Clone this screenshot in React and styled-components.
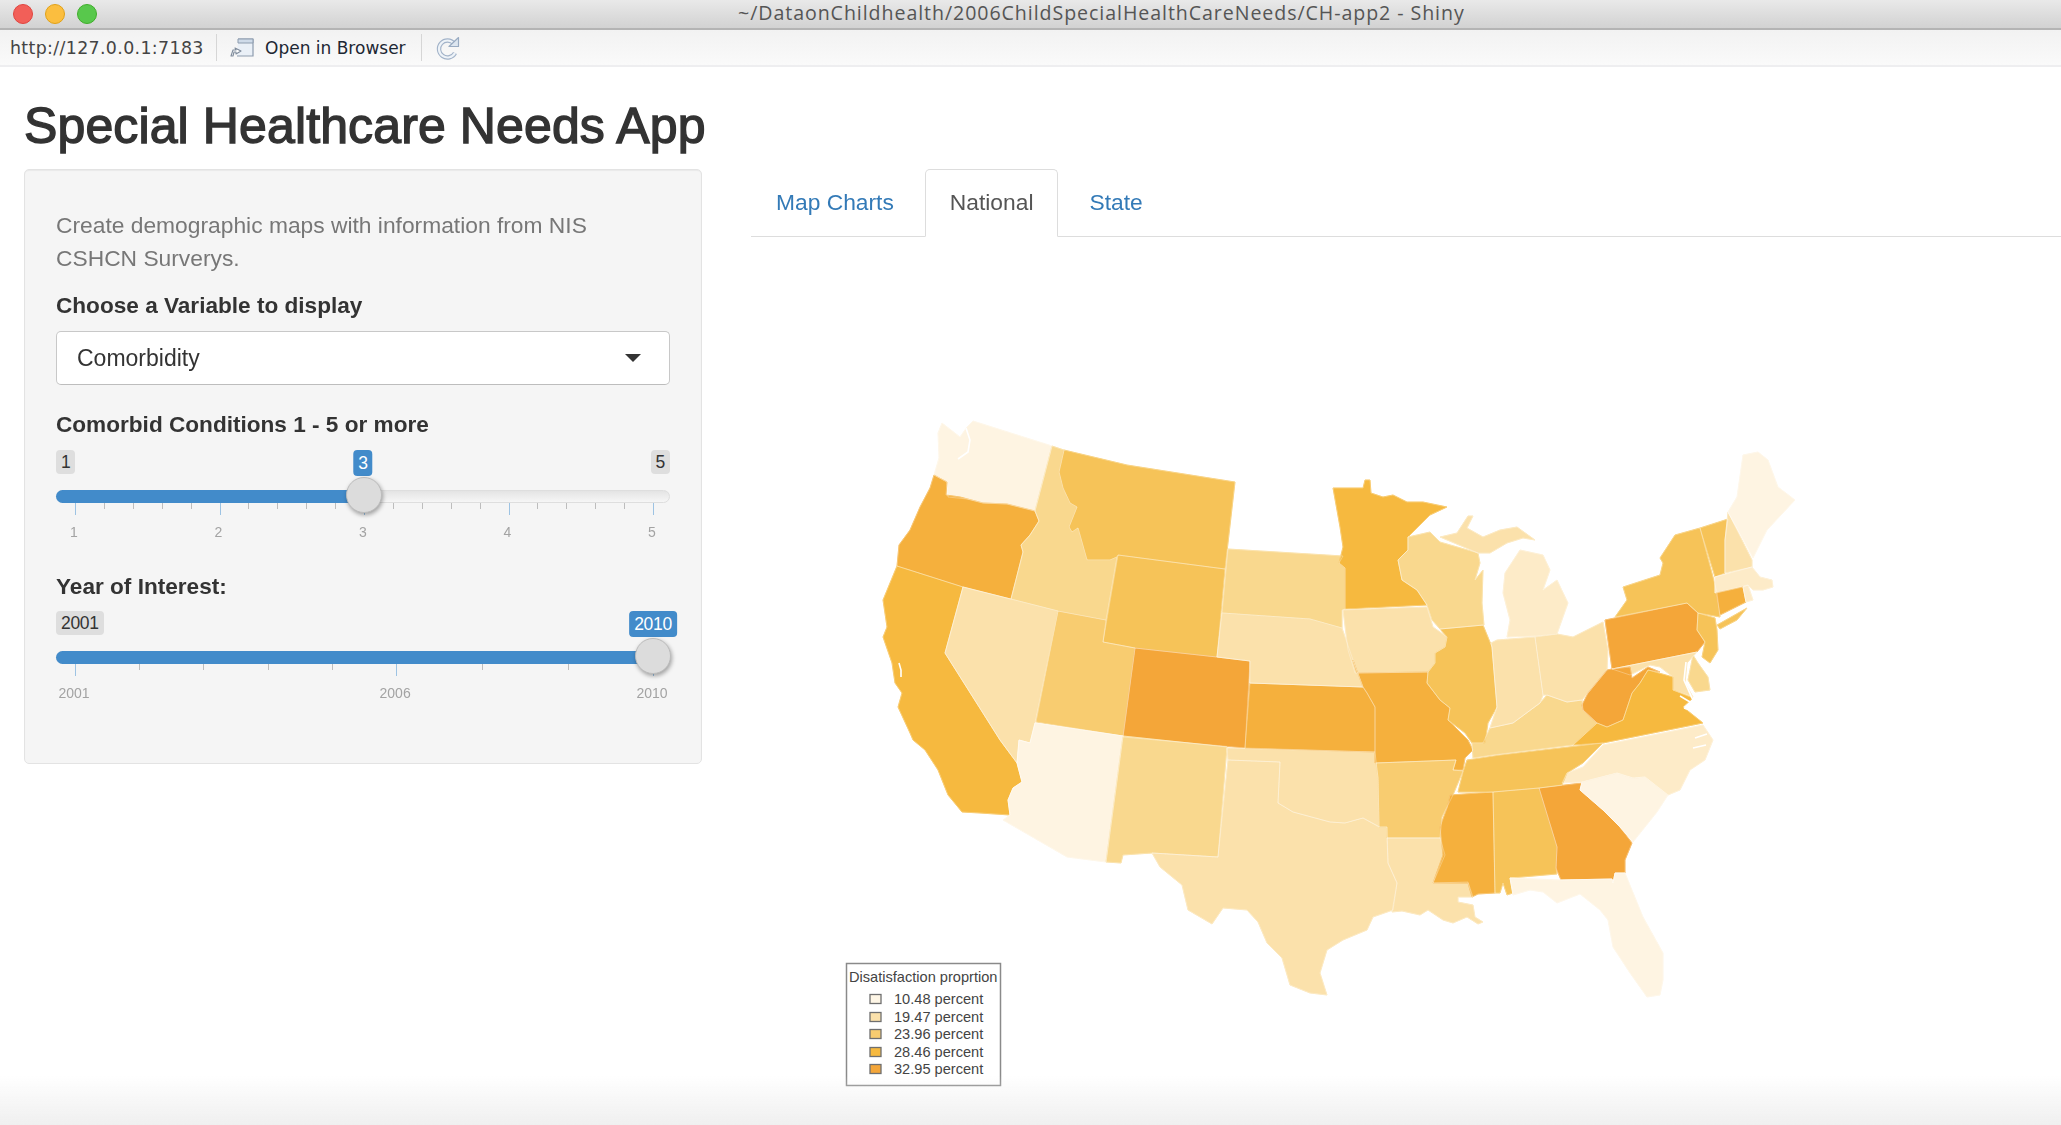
import React from 'react';
import styled, { createGlobalStyle } from 'styled-components';

const GlobalStyle = createGlobalStyle`
  html, body {
    margin: 0;
    height: 1125px;
    overflow: hidden;
    background: #fff;
    font-family: "Liberation Sans", Arial, sans-serif;
    -webkit-font-smoothing: antialiased;
  }
`;

// the reference is a resampled retina capture, so everything is a touch soft
const Window = styled.div`
  display: flex;
  flex-direction: column;
  height: 1125px;
  overflow: hidden;
  position: relative;
  filter: blur(0.4px);
`;

const TitleBar = styled.div`
  height: 28px;
  flex: none;
  display: flex;
  align-items: center;
  padding-left: 13px;
  gap: 12px;
  position: relative;
  background: linear-gradient(#e9e9e9, #d2d2d2);
  border-bottom: 2px solid #b4b4b4;
`;

const Light = styled.span`
  width: 20px;
  height: 20px;
  border-radius: 50%;
  background: ${(p) => p.$color};
  border: 1px solid ${(p) => p.$edge};
  box-sizing: border-box;
`;

const WindowTitle = styled.div`
  position: absolute;
  left: 738px;
  top: 2px;
  font-family: "Open Sans", sans-serif;
  font-size: 19.6px;
  letter-spacing: 0.93px;
  line-height: 22px;
  color: #555;
  white-space: nowrap;
`;

const Toolbar = styled.div`
  height: 35px;
  flex: none;
  display: flex;
  align-items: center;
  background: linear-gradient(#f2f2f2, #fafafa);
  border-bottom: 2px solid #eeeef0;
  font-family: "DejaVu Sans", sans-serif;
  color: #333;
`;

const UrlText = styled.span`
  margin-left: 10px;
  width: 206px;
  flex: none;
  font-size: 17.4px;
  letter-spacing: 0.35px;
  white-space: nowrap;
  color: #444;
`;

const ToolDivider = styled.span`
  width: 1px;
  height: 27px;
  background: #d6d6d6;
`;

const OpenButton = styled.div`
  display: flex;
  align-items: center;
  gap: 9px;
  margin-left: 12px;
  width: 192px;
  color: #1d2733;
  white-space: nowrap;
  font-size: 17px;
`;

const ReloadIcon = styled.svg`
  margin-left: 13px;
`;

const Columns = styled.div`
  flex: 1;
  display: grid;
  grid-template-columns: 678px 1fr;
  column-gap: 49px;
  padding-left: 24px;
  min-height: 0;
`;

const Heading = styled.h1`
  grid-column: 1 / 3;
  margin: 32px 0 16px;
  font-size: 50px;
  line-height: 54px;
  font-weight: 400;
  color: #333;
  letter-spacing: 0.12px;
  white-space: nowrap;
  -webkit-text-stroke: 1.4px #333;
`;

const Well = styled.aside`
  height: 595px;
  box-sizing: border-box;
  padding: 39px 31px 0;
  background: #f5f5f5;
  border: 1px solid #e3e3e3;
  border-radius: 5px;
  box-shadow: inset 0 1px 1px rgba(0, 0, 0, 0.05);
`;

const Intro = styled.p`
  margin: 0 0 18px;
  font-size: 22.8px;
  line-height: 33px;
  color: #777;
`;

const FieldLabel = styled.div`
  font-size: 22.6px;
  line-height: 26px;
  font-weight: 700;
  color: #333;
  margin-bottom: ${(p) => p.$gap}px;
`;

const SelectBox = styled.div`
  height: 54px;
  box-sizing: border-box;
  display: flex;
  align-items: center;
  justify-content: space-between;
  padding: 0 28px 0 20px;
  margin-bottom: 27px;
  background: #fff;
  border: 1px solid #c8c8c8;
  border-bottom-color: #bdbdbd;
  border-radius: 5px;
  font-size: 23px;
  color: #333;
`;

const Caret = styled.span`
  width: 0;
  height: 0;
  border-left: 8px solid transparent;
  border-right: 8px solid transparent;
  border-top: 8px solid #333;
`;

const SliderWrap = styled.div`
  position: relative;
  width: 614px;
  height: 90px;
`;

const SliderGap = styled.div`
  height: 34px;
`;

const Track = styled.div`
  position: absolute;
  left: 0;
  right: 0;
  top: 40px;
  height: 13px;
  border-radius: 7px;
  background: linear-gradient(#e4e4e4, #f6f6f6);
  border: 1px solid #dedede;
  box-sizing: border-box;
`;

const TrackFill = styled.div`
  position: absolute;
  left: 0;
  top: 40px;
  height: 13px;
  border-radius: 7px 0 0 7px;
  background: #428bca;
`;

const Tick = styled.span`
  position: absolute;
  top: 53px;
  width: 1px;
  height: ${(p) => (p.$major ? 12 : 6)}px;
  background: ${(p) => (p.$major ? '#9dc3e3' : '#bdbdbd')};
`;

const TickLabel = styled.span`
  position: absolute;
  top: 74px;
  transform: translateX(-50%);
  margin-left: -1px;
  font-size: 14px;
  line-height: 17px;
  color: #a3a3a3;
`;

const Handle = styled.span`
  position: absolute;
  top: 27px;
  width: 36px;
  height: 36px;
  box-sizing: border-box;
  margin-left: -18px;
  border-radius: 50%;
  background: #dcdcdc;
  border: 1px solid #bbb;
  box-shadow: 1px 2px 4px rgba(0, 0, 0, 0.35);
`;

const Bubble = styled.span`
  position: absolute;
  top: 0;
  height: ${(p) => (p.$active ? 26 : 24)}px;
  padding: 0 5px;
  border-radius: 4px;
  font-size: 17.5px;
  line-height: ${(p) => (p.$active ? 26 : 24)}px;
  letter-spacing: -0.3px;
  background: ${(p) => (p.$active ? '#428bca' : '#dedede')};
  color: ${(p) => (p.$active ? '#fff' : '#333')};
  ${(p) => (p.$active ? 'transform: translateX(-50%);' : '')}
`;

const Main = styled.main`
  display: flex;
  flex-direction: column;
  min-width: 0;
`;

const TabBar = styled.nav`
  display: flex;
  height: 67px;
  flex: none;
  border-bottom: 1px solid #ddd;
  font-size: 22.8px;
`;

const Tab = styled.div`
  box-sizing: border-box;
  height: ${(p) => (p.$active ? 68 : 67)}px;
  padding: 0 24px 2px;
  display: flex;
  align-items: center;
  border: 1px solid ${(p) => (p.$active ? '#ddd' : 'transparent')};
  border-bottom: ${(p) => (p.$active ? '1px solid #fff' : '0')};
  border-radius: 5px 5px 0 0;
  background: ${(p) => (p.$active ? '#fff' : 'transparent')};
  color: ${(p) => (p.$active ? '#555' : '#337ab7')};
  margin-right: 6px;
`;

const MapSvg = styled.svg`
  display: block;
  flex: 1;
  width: 1310px;
  height: 888px;
`;

const BottomFade = styled.div`
  position: absolute;
  left: 0;
  right: 0;
  bottom: 0;
  height: 50px;
  pointer-events: none;
  background: linear-gradient(rgba(240, 240, 240, 0), rgba(238, 238, 238, 0.9));
`;

// fill colours of the five classes plus the in-between shades of the plot
const C = {
  a: '#f4a639',
  b: '#f5b03d',
  c: '#f6b93f',
  d: '#f6c358',
  e: '#f8cc70',
  f: '#f9d88e',
  g: '#fbe1ab',
  h: '#fdebc8',
  i: '#fef4e2',
};

const STATES = [
  ['WA', C.i, '942,423 960,437 967,427 973,421 1052,446 1035,511 1007,504 983,503 967,499 948,497 947,482 934,475 939,458 938,433'],
  ['OR', C.b, '934,475 947,482 946,495 960,497 983,503 1007,504 1035,511 1039,521 1030,535 1021,545 1023,552 1011,599 963,587 897,566 899,545 910,530 920,507 930,488'],
  ['CA', C.c, '897,566 963,587 945,653 1000,740 1017,763 1022,782 1013,788 1008,800 1010,815 980,813 962,812 948,795 938,770 925,750 913,740 910,733 898,707 902,693 895,683 892,663 883,637 887,627 883,600'],
  ['NV', C.g, '963,587 1058,611 1035,723 1030,743 1019,740 1017,763 1000,740 945,653'],
  ['ID', C.f, '1052,446 1064,450 1059,472 1063,488 1070,503 1077,507 1069,527 1072,532 1078,528 1087,560 1110,560 1117,557 1106,620 1058,611 1011,599 1023,552 1021,545 1030,535 1039,521 1035,511'],
  ['MT', C.d, '1064,450 1127,465 1235,482 1225,569 1118,555 1117,557 1110,560 1087,560 1078,528 1072,532 1069,527 1077,507 1070,503 1063,488 1059,472'],
  ['WY', C.d, '1118,555 1225,569 1217,657 1135,648 1103,642'],
  ['UT', C.e, '1058,611 1106,620 1103,642 1135,648 1123,736 1036,722'],
  ['CO', C.a, '1135,648 1217,657 1250,661 1245,748 1123,737'],
  ['AZ', C.i, '1035,723 1123,736 1106,862 1067,857 1003,820 1010,815 1008,800 1013,788 1022,782 1017,763 1019,740 1030,743'],
  ['NM', C.f, '1123,736 1227,747 1218,857 1152,853 1123,855 1121,863 1106,862'],
  ['TX', C.g, '1228,760 1280,762 1278,803 1293,812 1330,822 1345,823 1363,818 1380,827 1387,827 1388,863 1397,883 1393,910 1373,917 1367,930 1343,940 1327,950 1320,973 1327,995 1310,993 1290,985 1282,958 1267,943 1258,922 1247,910 1223,908 1212,924 1188,910 1182,885 1160,867 1152,853 1218,857'],
  ['OK', C.g, '1227,748 1375,752 1378,778 1379,827 1363,818 1345,823 1330,822 1293,812 1278,803 1280,762 1228,760'],
  ['KS', C.b, '1250,683 1363,687 1367,693 1375,707 1375,752 1245,748'],
  ['NE', C.g, '1222,613 1310,619 1342,628 1353,660 1363,687 1250,683 1250,661 1217,657'],
  ['SD', C.f, '1228,549 1343,556 1339,563 1345,568 1345,609 1342,610 1342,628 1310,619 1222,613'],
  ['MN', C.c, '1333,488 1363,488 1365,480 1370,480 1371,493 1383,497 1393,495 1407,502 1423,502 1447,507 1430,515 1408,537 1408,550 1398,560 1402,580 1417,590 1427,605 1345,609 1345,568 1339,563 1343,547 1340,527'],
  ['IA', C.g, '1343,610 1427,607 1433,627 1447,637 1445,647 1435,653 1435,663 1428,672 1355,673 1348,650'],
  ['MO', C.b, '1357,673 1428,672 1427,683 1440,700 1450,708 1448,720 1468,740 1473,750 1465,758 1463,770 1453,770 1456,760 1375,763 1375,707 1367,693 1363,687 1353,660'],
  ['AR', C.e, '1376,763 1456,760 1453,770 1463,771 1453,795 1442,817 1440,838 1387,838 1387,827 1379,827 1378,778'],
  ['LA', C.g, '1387,838 1440,838 1445,855 1433,883 1468,882 1473,897 1458,897 1458,902 1473,905 1475,917 1483,922 1478,924 1467,917 1453,923 1443,920 1428,910 1420,915 1402,911 1392,912 1397,883 1388,863'],
  ['MS', C.b, '1450,795 1493,792 1495,893 1478,894 1472,897 1468,883 1433,883 1443,855 1440,827 1447,808'],
  ['AL', C.d, '1493,792 1539,788 1557,847 1556,868 1557,874 1510,878 1513,893 1507,895 1503,883 1500,893 1495,893'],
  ['GA', C.a, '1539,788 1582,783 1580,790 1603,810 1620,827 1632,843 1625,860 1625,873 1615,873 1613,883 1612,879 1561,880 1556,868 1557,847'],
  ['FL', C.i, '1510,878 1561,880 1612,879 1613,883 1615,873 1625,873 1643,917 1663,953 1663,980 1660,995 1647,997 1630,973 1613,947 1608,920 1600,910 1580,894 1557,903 1543,892 1530,890 1513,895'],
  ['SC', C.i, '1580,790 1582,782 1617,773 1633,778 1645,777 1668,795 1657,812 1633,842 1620,827 1603,810'],
  ['NC', C.h, '1562,783 1567,773 1583,767 1603,745 1703,725 1713,740 1705,760 1690,770 1680,790 1668,795 1645,777 1633,778 1617,773 1582,782'],
  ['TN', C.d, '1458,792 1463,772 1467,760 1500,755 1603,743 1583,763 1567,773 1562,785 1539,788 1493,792'],
  ['KY', C.f, '1472,743 1483,743 1490,728 1513,723 1540,703 1547,695 1567,702 1582,700 1583,710 1597,723 1573,745 1493,755 1473,758'],
  ['IL', C.d, '1440,629 1483,625 1492,647 1497,707 1488,723 1485,743 1472,743 1465,733 1448,720 1450,708 1440,700 1427,683 1428,672 1435,663 1435,653 1445,647 1447,637'],
  ['WI', C.f, '1408,537 1430,532 1440,542 1478,553 1480,563 1475,580 1483,570 1482,603 1484,625 1440,629 1432,620 1427,605 1417,590 1402,580 1398,560 1408,550'],
  ['MI-U', C.g, '1440,537 1457,533 1468,516 1473,516 1467,528 1483,537 1500,530 1517,527 1535,540 1523,538 1507,543 1490,553 1478,553'],
  ['MI', C.h, '1507,637 1510,620 1503,593 1505,573 1520,550 1543,555 1550,570 1543,590 1557,580 1568,603 1557,634 1537,636'],
  ['IN', C.g, '1491,643 1497,640 1535,637 1543,695 1540,703 1513,723 1490,728 1497,707 1492,647'],
  ['OH', C.g, '1535,637 1557,634 1573,637 1603,622 1608,650 1607,670 1588,693 1582,700 1567,702 1547,695 1543,695'],
  ['PA', C.a, '1605,620 1687,603 1698,613 1697,630 1705,642 1697,652 1612,669'],
  ['NY', C.d, '1615,617 1627,600 1623,587 1660,575 1663,563 1660,558 1675,535 1700,528 1713,577 1717,593 1720,617 1698,613 1687,603'],
  ['LI', C.d, '1717,625 1747,608 1737,620 1720,629'],
  ['VT', C.d, '1700,528 1728,519 1725,540 1725,573 1715,577'],
  ['NH', C.g, '1728,512 1752,560 1752,567 1725,573 1725,540'],
  ['ME', C.i, '1743,455 1758,452 1768,460 1778,487 1795,500 1767,530 1753,558 1728,512 1737,497'],
  ['MA', C.h, '1715,577 1752,567 1760,577 1772,580 1773,587 1763,590 1753,590 1748,585 1715,593'],
  ['CT', C.b, '1716,593 1743,587 1746,602 1720,615'],
  ['RI', C.h, '1743,587 1748,585 1753,600 1746,602'],
  ['NJ', C.d, '1698,613 1715,618 1717,630 1718,650 1710,663 1702,657 1705,642 1697,630'],
  ['MD', C.g, '1612,669 1697,652 1687,663 1685,683 1693,697 1673,690 1673,677 1660,667 1650,665 1630,675'],
  ['DE', C.f, '1693,655 1698,663 1708,677 1710,690 1695,692 1688,680'],
  ['WV', C.a, '1612,669 1630,667 1632,678 1648,667 1660,672 1648,670 1640,683 1632,693 1623,720 1607,727 1597,723 1583,710 1582,705 1588,693 1607,670'],
  ['VA', C.c, '1573,745 1597,723 1607,727 1623,720 1632,693 1640,683 1648,670 1673,677 1673,690 1693,698 1683,707 1703,723 1603,743'],
];

// water that cuts into the land: Puget Sound, San Francisco Bay, Chesapeake Bay, Pamlico Sound
const INLETS = [
  'M966,428 L970,440 L968,452 L958,459',
  'M899,663 L901,670 L901,677',
  'M1686,662 L1684,680 L1692,698 L1702,712',
  'M1680,696 L1690,702 M1684,708 L1696,712',
  'M1695,738 L1707,734 M1693,748 L1706,745',
];

const LEGEND = [
  ['10.48 percent', '#fef6e6', 999],
  ['19.47 percent', '#fbe1ab', 1017],
  ['23.96 percent', '#f8cc70', 1034],
  ['28.46 percent', '#f6b93f', 1052],
  ['32.95 percent', '#f4a639', 1069],
];

const COMORBID_TICKS = [1, 1.2, 1.4, 1.6, 1.8, 2, 2.2, 2.4, 2.6, 2.8, 3, 3.2, 3.4, 3.6, 3.8, 4, 4.2, 4.4, 4.6, 4.8, 5];
const YEAR_TICKS = [2001, 2002, 2003, 2004, 2005, 2006, 2007.33, 2008.67, 2010];

function Slider({ ticks, labels, from, to, min, max, value, valueLeft }) {
  // scale runs from 19px to 597px inside the 614px wide slider
  const place = (v) => 19 + ((v - min) / (max - min)) * 578;
  return (
    <SliderWrap>
      <Bubble style={{ left: 0 }}>{from}</Bubble>
      {to && <Bubble style={{ right: 0 }}>{to}</Bubble>}
      <Bubble $active style={{ left: valueLeft }}>{value}</Bubble>
      <Track />
      <TrackFill style={{ width: place(Number(value)) }} />
      {ticks.map((t) => (
        <Tick key={t} $major={labels.includes(t)} style={{ left: place(t) }} />
      ))}
      {labels.map((t) => (
        <TickLabel key={t} style={{ left: place(t) }}>{t}</TickLabel>
      ))}
      <Handle style={{ left: place(Number(value)) }} />
    </SliderWrap>
  );
}

function UsMap() {
  return (
    <MapSvg viewBox="751 237 1310 888">
      {STATES.map(([id, fill, points]) => (
        <polygon key={id} points={points} fill={fill} stroke={fill} strokeWidth="1" strokeLinejoin="round" />
      ))}
      {STATES.map(([id, , points]) => (
        <polygon key={id} points={points} fill="none" stroke="#fff" strokeOpacity="0.4" strokeWidth="0.7" />
      ))}
      {INLETS.map((d) => (
        <path key={d} d={d} fill="none" stroke="#fff" strokeWidth="1.6" />
      ))}
      <rect x="846.5" y="963.5" width="154" height="122" fill="#fff" stroke="#8a8a8a" strokeWidth="1.5" />
      <text x="849" y="982" fontFamily="Liberation Sans, sans-serif" fontSize="14.6" fill="#444">Disatisfaction proprtion</text>
      {LEGEND.map(([label, fill, y]) => (
        <g key={label}>
          <rect x="870" y={y - 4.5} width="11" height="9" fill={fill} stroke="#6f6f6f" strokeWidth="1.3" />
          <text x="894" y={y + 5} fontFamily="Liberation Sans, sans-serif" fontSize="14.6" fill="#444">{label}</text>
        </g>
      ))}
    </MapSvg>
  );
}

export default function App() {
  return (
    <Window>
      <GlobalStyle />
      <TitleBar>
        <Light $color="#f25f58" $edge="#e0443e" />
        <Light $color="#fbbe3f" $edge="#e1a116" />
        <Light $color="#58c84c" $edge="#3fae2a" />
        <WindowTitle>~/DataonChildhealth/2006ChildSpecialHealthCareNeeds/CH-app2 - Shiny</WindowTitle>
      </TitleBar>
      <Toolbar>
        <UrlText>http://127.0.0.1:7183</UrlText>
        <ToolDivider />
        <OpenButton>
          <svg width="27" height="22" viewBox="0 0 27 22" fill="none">
            <path d="M9 2h15v17H8" fill="#eaf0f7" stroke="#8d9cae" strokeWidth="1.2" />
            <path d="M9 2h15v4H9z" fill="#cfdbe9" stroke="#8d9cae" strokeWidth="1" />
            <path d="M2 19l2-6h3l-1-2 6 3-5 3v-2H5l-1 4z" fill="#fff" stroke="#7f8c9c" strokeWidth="1.1" strokeLinejoin="round" />
          </svg>
          Open in Browser
        </OpenButton>
        <ToolDivider />
        <ReloadIcon width="26" height="26" viewBox="0 0 26 26" fill="none">
          <path d="M19 8.5A8.5 8.5 0 1 0 20 18" stroke="#a2b3c9" strokeWidth="4.4" />
          <path d="M19 8.5A8.5 8.5 0 1 0 20 18" stroke="#eef3f8" strokeWidth="2.2" />
          <path d="M14 11.5h9.5V2.5z" fill="#dde6f0" stroke="#99abc2" strokeWidth="1.2" strokeLinejoin="round" />
        </ReloadIcon>
      </Toolbar>
      <Columns>
        <Heading>Special Healthcare Needs App</Heading>
        <Well>
          <Intro>
            Create demographic maps with information from NIS
            <br />
            CSHCN Surverys.
          </Intro>
          <FieldLabel $gap={12}>Choose a Variable to display</FieldLabel>
          <SelectBox>
            Comorbidity
            <Caret />
          </SelectBox>
          <FieldLabel $gap={12}>Comorbid Conditions 1 - 5 or more</FieldLabel>
          <Slider ticks={COMORBID_TICKS} labels={[1, 2, 3, 4, 5]} from="1" to="5" min={1} max={5} value="3" valueLeft={307} />
          <SliderGap />
          <FieldLabel $gap={11}>Year of Interest:</FieldLabel>
          <Slider
            ticks={YEAR_TICKS}
            labels={[2001, 2006, 2010]}
            from="2001"
            min={2001}
            max={2010}
            value="2010"
            valueLeft={597}
          />
        </Well>
        <Main>
          <TabBar>
            <Tab>Map Charts</Tab>
            <Tab $active>National</Tab>
            <Tab>State</Tab>
          </TabBar>
          <UsMap />
        </Main>
      </Columns>
      <BottomFade />
    </Window>
  );
}
